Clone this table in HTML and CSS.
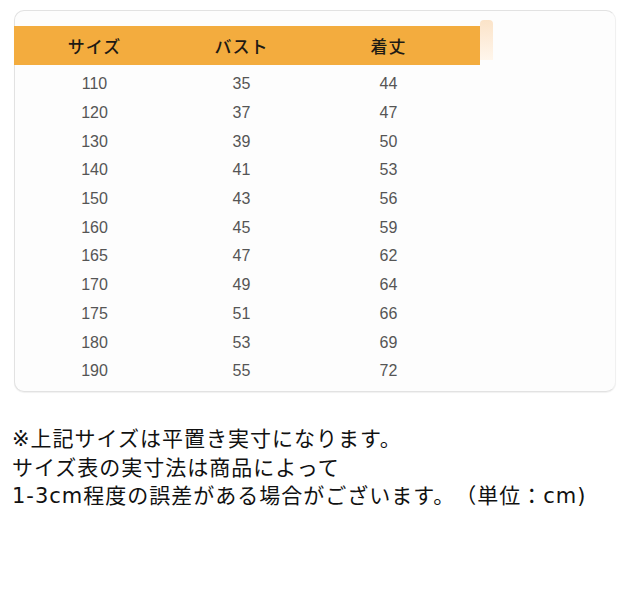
FILE: index.html
```html
<!DOCTYPE html>
<html lang="ja">
<head>
<meta charset="utf-8">
<link rel="stylesheet" href="styles.css">
</head>
<body>
<div class="card">
  <div class="tab"></div>
  <div class="head">
    <div class="cell">サイズ</div><div class="cell">バスト</div><div class="cell">着丈</div>
  </div>
  <div class="rows">
    <div class="row"><div class="cell">110</div><div class="cell">35</div><div class="cell">44</div></div>
    <div class="row"><div class="cell">120</div><div class="cell">37</div><div class="cell">47</div></div>
    <div class="row"><div class="cell">130</div><div class="cell">39</div><div class="cell">50</div></div>
    <div class="row"><div class="cell">140</div><div class="cell">41</div><div class="cell">53</div></div>
    <div class="row"><div class="cell">150</div><div class="cell">43</div><div class="cell">56</div></div>
    <div class="row"><div class="cell">160</div><div class="cell">45</div><div class="cell">59</div></div>
    <div class="row"><div class="cell">165</div><div class="cell">47</div><div class="cell">62</div></div>
    <div class="row"><div class="cell">170</div><div class="cell">49</div><div class="cell">64</div></div>
    <div class="row"><div class="cell">175</div><div class="cell">51</div><div class="cell">66</div></div>
    <div class="row"><div class="cell">180</div><div class="cell">53</div><div class="cell">69</div></div>
    <div class="row"><div class="cell">190</div><div class="cell">55</div><div class="cell">72</div></div>
  </div>
</div>
<div class="note">
  <p>※上記サイズは平置き実寸になります。</p>
  <p>サイズ表の実寸法は商品によって</p>
  <p>1-3cm程度の誤差がある場合がございます。（単位：cm)</p>
</div>
</body>
</html>
```

FILE: styles.css
```css
html, body {
  margin: 0;
  padding: 0;
  background: #ffffff;
}
body {
  width: 631px;
  height: 607px;
  overflow: hidden;
  font-family: "Liberation Sans", "Noto Sans CJK JP", sans-serif;
}
.card {
  position: relative;
  box-sizing: border-box;
  margin: 10px 0 0 14px;
  width: 602px;
  height: 382px;
  border: 1px solid #e2e2e2;
  border-right-color: #f0f0f0;
  border-radius: 10px;
  box-shadow: 0 1px 1px rgba(0,0,0,0.06);
  background: #fdfdfd;
  padding-top: 15px;
}
.tab {
  position: absolute;
  left: 465px;
  top: 9px;
  width: 13px;
  height: 40px;
  border-radius: 4px 4px 0 0;
  background: linear-gradient(#fbe3c8, #fff6ec);
}
.head {
  display: grid;
  grid-template-columns: 147px 147px 147px;
  padding-left: 7px;
  width: 459px;
  height: 39px;
  align-items: center;
  background: #f3ac3e;
  margin-left: -1px;
  color: #1e1a14;
  font-size: 17px;
  font-weight: 500;
  font-family: "Noto Sans CJK JP", sans-serif;
  letter-spacing: 1px;
}
.cell {
  text-align: center;
}
.rows {
  padding-top: 5px;
}
.row {
  display: grid;
  grid-template-columns: 147px 147px 147px;
  padding-left: 6px;
  height: 28.7px;
  align-items: center;
  color: #555555;
  font-size: 16px;
}
.note {
  margin: 33px 0 0 12px;
  font-family: "DejaVu Sans", "Noto Sans CJK JP", sans-serif;
  font-size: 21px;
  letter-spacing: 1px;
  line-height: 28.5px;
  color: #111111;
  text-spacing-trim: space-all;
}
.note p {
  margin: 0;
}
```
